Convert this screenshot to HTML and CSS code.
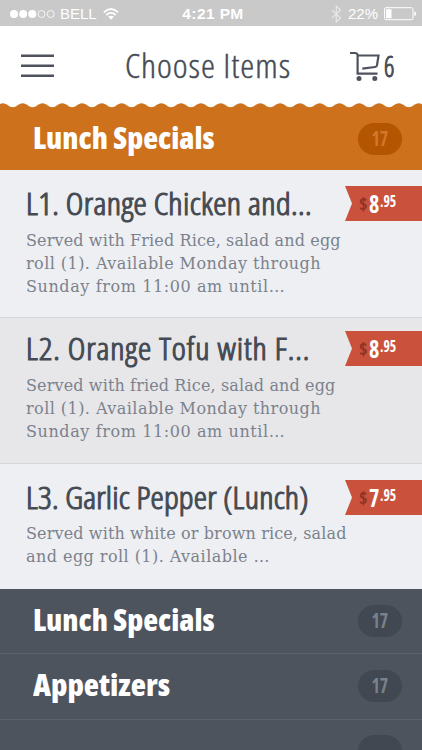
FILE: index.html
```html
<!DOCTYPE html>
<html lang="en">
<head>
  <title>Choose Items</title>
  <meta charset="UTF-8">
  <meta name="viewport" content="width=device-width, initial-scale=1.0">
  <link rel="stylesheet" href="styles.css">
</head>
<body>
  <div class="status-bar">
    <div class="carrier">
      <svg width="46" height="10" viewBox="0 0 46 10">
        <g fill="#fff"><circle cx="4" cy="5" r="4"/><circle cx="13.2" cy="5" r="4"/><circle cx="22.3" cy="5" r="4"/></g>
        <g fill="none" stroke="#fff" stroke-width=".8"><circle cx="31.5" cy="5" r="3.5"/><circle cx="40.7" cy="5" r="3.5"/></g>
      </svg>
      <span class="carrier-name">BELL</span>
      <svg class="wifi" width="16" height="12" viewBox="0 0 16 12">
        <g fill="none" stroke="#fff" stroke-width="1.8"><path d="M.8 4.3Q8-2.3 15.2 4.3"/><path d="M3.3 7Q8 2.8 12.7 7"/></g>
        <path d="M5.2 8.8Q8 6.6 10.8 8.8L8 11.8z" fill="#fff"/>
      </svg>
    </div>
    <span class="time">4:21 PM</span>
    <div class="power">
      <svg width="11" height="18" viewBox="0 0 11 18" fill="none" stroke="#e6e6e6" stroke-width="1.2"><path d="M1 5l8.5 8L5.3 17V1l4.2 4L1 13"/></svg>
      <span class="percent">22%</span>
      <svg width="33" height="14" viewBox="0 0 33 14">
        <rect x=".5" y=".7" width="28.5" height="12" rx="1.5" fill="none" stroke="#fff"/>
        <rect x="2" y="2.2" width="5.5" height="9" fill="#fff"/>
        <path d="M30.3 4.5q2 .5 2 2.2t-2 2.2z" fill="#fff"/>
      </svg>
    </div>
  </div>

  <div class="header">
    <svg width="33" height="24" viewBox="0 0 33 24" stroke="#4d525d" stroke-width="2.4"><path d="M0 1.8h33M0 11.7h33M0 21.7h33"/></svg>
    <h1><span class="narrow">Choose Items</span></h1>
    <a class="cart">
      <svg width="30" height="30" viewBox="0 0 30 30" fill="none" stroke="#4d525d" stroke-width="2.2">
        <path d="M0 2h4.8q2.8 0 2.8 2.5V22.7H27.5M8 4.5H28.5L27 14.2q-.3 1.6-2 1.8L12.3 17.6"/>
        <g fill="#4d525d" stroke="none"><circle cx="9" cy="27.5" r="2.5"/><circle cx="24.8" cy="27.5" r="2.5"/></g>
      </svg>
      <span class="cart-count narrow">6</span>
    </a>
  </div>

  <svg class="scallop" width="422" height="5">
    <defs>
      <pattern id="wave" x="-7" width="19.8" height="5" patternUnits="userSpaceOnUse">
        <path d="M0 4.2C4 4.2 5.5.2 9.9.2S15.8 4.2 19.8 4.2V5H0z" fill="#cd711c"/>
      </pattern>
    </defs>
    <rect width="422" height="5" fill="url(#wave)"/>
  </svg>
  <div class="category active">
    <h2><span class="narrow">Lunch Specials</span></h2>
    <span class="badge"><span class="narrow">17</span></span>
  </div>

  <div class="item first">
    <div class="item-text">
      <h3><span class="narrow">L1. Orange Chicken and...</span></h3>
      <p><span>Served with Fried Rice, salad and egg</span><span class="loose">roll (1). Available Monday through</span><span class="looser">Sunday from 11:00 am until…</span></p>
    </div>
    <div class="price"><span class="dollar narrow">$</span><span class="whole narrow">8</span><span class="cents narrow">.95</span></div>
  </div>
  <div class="item alt">
    <div class="item-text">
      <h3><span class="narrow wide-title">L2. Orange Tofu with F...</span></h3>
      <p><span>Served with fried Rice, salad and egg</span><span class="loose">roll (1). Available Monday through</span><span class="looser">Sunday from 11:00 am until…</span></p>
    </div>
    <div class="price"><span class="dollar narrow">$</span><span class="whole narrow">8</span><span class="cents narrow">.95</span></div>
  </div>
  <div class="item short">
    <div class="item-text">
      <h3><span class="narrow tight-title">L3. Garlic Pepper (Lunch)</span></h3>
      <p><span>Served with white or brown rice, salad</span><span class="loose">and egg roll (1). Available …</span></p>
    </div>
    <div class="price"><span class="dollar narrow">$</span><span class="whole narrow">7</span><span class="cents narrow">.95</span></div>
  </div>

  <div class="category">
    <h2><span class="narrow">Lunch Specials</span></h2>
    <span class="badge"><span class="narrow">17</span></span>
  </div>
  <div class="category tall">
    <h2><span class="narrow">Appetizers</span></h2>
    <span class="badge"><span class="narrow">17</span></span>
  </div>
  <div class="category cut">
    <span class="badge"></span>
  </div>
</body>
</html>
```
FILE: styles.css
```css
* {
  box-sizing: border-box;
}
body {
  font-family: "Open Sans", "Noto Sans", sans-serif;
  background: #fff;
  color: #454b54;
  margin: 0;
  height: 750px;
  overflow: hidden;
}
h1, h2, h3, p {
  margin: 0;
}
svg {
  display: block;
  flex: none;
}
.narrow {
  display: inline-block;
  white-space: nowrap;
  font-stretch: 75%;
  transform-origin: left center;
}
.status-bar {
  height: 26px;
  padding: 1px 5px 0 10px;
  background: #c9c9c9;
  color: #fff;
  font: 15px "Liberation Sans", sans-serif;
  display: grid;
  grid-template-columns: 1fr auto 1fr;
  align-items: center;
}
.carrier, .power {
  display: flex;
  align-items: center;
}
.carrier-name {
  margin: 0 6px 0 4px;
}
.time {
  font-size: 15.5px;
  letter-spacing: 0.4px;
  font-weight: bold;
  padding-right: 1px;
}
.power {
  justify-content: flex-end;
  gap: 6px;
}
.header {
  height: 77px;
  padding: 2px 27px 0 21px;
  display: flex;
  align-items: center;
}
.header h1 {
  width: 224px;
  padding-left: 71px;
  flex: 1;
  font-size: 33px;
  font-weight: 300;
  line-height: 50px;
}
.header h1 .narrow {
  letter-spacing: 0.9px;
  transform: scaleX(1.07);
  -webkit-text-stroke: 0.4px #454b54;
}
.cart {
  display: flex;
  align-items: center;
  gap: 4px;
}
.cart-count {
  width: 11px;
  font-size: 29px;
  font-weight: 300;
  line-height: 40px;
  transform: scaleX(0.88);
  -webkit-text-stroke: 1px #454b54;
}
.category {
  height: 65px;
  padding: 0 20px 0 33px;
  background: #4e545e;
  border-bottom: 1px solid #5b626c;
  display: flex;
  align-items: center;
}
.category.tall {
  height: 66px;
}
.category.tall .badge {
  margin-bottom: 2px;
}
.category.cut {
  height: 30px;
  padding-top: 15px;
  border: 0;
  align-items: flex-start;
  overflow: hidden;
}
.category.active {
  height: 62px;
  background: #cd711c;
  border: 0;
}
.category h2 {
  padding-bottom: 4px;
  color: #fff;
  font-size: 30px;
  font-weight: 800;
}
.category h2 .narrow {
  transform: scaleX(1.02);
}
.category.tall h2 .narrow {
  transform: scaleX(1.045);
}
.badge {
  width: 44px;
  height: 32px;
  margin-left: auto;
  border-radius: 16px;
  background: #414851;
  color: #78828d;
  font-size: 21px;
  font-weight: 700;
  display: flex;
  flex: none;
  align-items: center;
  justify-content: center;
}
.badge .narrow {
  line-height: 30px;
  padding-bottom: 2px;
  transform: scaleX(0.84);
  transform-origin: center;
}
.active .badge {
  background: #b45502;
  color: #d3772a;
}
.item {
  height: 146px;
  padding: 13px 0 0 26px;
  background: #eeeff2;
  border-bottom: 1px solid #d5d6da;
  display: flex;
  justify-content: space-between;
}
.item.first {
  height: 148px;
  padding-top: 16px;
}
.item.alt {
  background: #e7e7ea;
}
.item.short {
  height: 125px;
  padding-top: 16px;
  border: 0;
}
.item h3 {
  height: 43px;
  font-size: 31px;
  line-height: 35px;
  font-weight: 300;
}
.item.short h3 {
  height: 42px;
}
.item h3 .narrow {
  letter-spacing: 0.35px;
  transform: scaleX(1.08);
  -webkit-text-stroke: 1.1px #454b54;
}
.item h3 .wide-title {
  letter-spacing: 0.81px;
}
.item h3 .tight-title {
  letter-spacing: 0.22px;
}
.item p {
  width: 330px;
  font: 16px/23px "DejaVu Serif", serif;
  letter-spacing: 0.13px;
  color: #7b828d;
}
.item p span {
  display: block;
  white-space: nowrap;
}
.item p .loose {
  letter-spacing: 0.45px;
}
.item p .looser {
  letter-spacing: 0.6px;
}
.price {
  width: 77px;
  height: 35px;
  margin-left: -11px;
  padding-left: 14px;
  background: #ca523c;
  clip-path: polygon(0 0, 100% 0, 100% 100%, 0 100%, 7px 50%);
  color: #fff;
  display: flex;
  flex: none;
}
.dollar {
  width: 10px;
  color: #8d3425;
  font-size: 18px;
  line-height: 36px;
  font-weight: 700;
}
.whole {
  width: 11px;
  font-size: 25px;
  line-height: 35px;
  font-weight: 700;
  transform: scaleX(0.88);
}
.cents {
  font-size: 16px;
  line-height: 30px;
  font-weight: 700;
  transform: scaleX(0.85);
}
```
